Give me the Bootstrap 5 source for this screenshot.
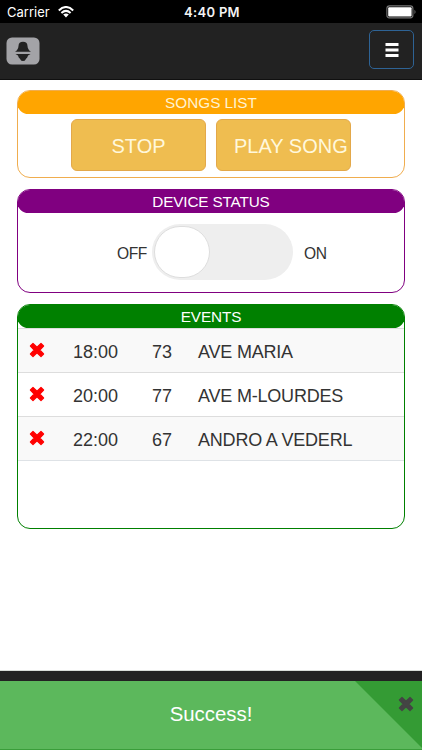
<!DOCTYPE html>
<html lang="en">
<head>
<meta charset="utf-8">
<meta name="viewport" content="width=device-width, initial-scale=1">
<title>Songs</title>
<link href="https://cdn.jsdelivr.net/npm/bootstrap@5.3.0/dist/css/bootstrap.min.css" rel="stylesheet">
<style>
body{font-family:"Liberation Sans",Arial,sans-serif;color:#333;height:750px;overflow:hidden}
.status{height:23px;background:#000;color:#fff;font:13px/24px Inter,sans-serif;padding:0 5px 0 7px}
.status .side{flex:1 1 0}
.clock{font-weight:600;letter-spacing:.3px;color:#f4f4f4}
.top{height:57px;background:#222;border-bottom:1px solid #101010;padding:0 8px 0 6px}
.menu-btn{width:45px;height:39px;border:1px solid #2e6395;border-radius:5px;padding:0;margin-top:-3px}
.page{padding:10px 17px 0 17px;gap:11px;height:590px}
.panel{border:1px solid;border-radius:13px;overflow:hidden;width:388px}
.panel-title{height:23px;border-radius:12px;margin:0 -1px;color:#fff;font-size:15.3px;line-height:24px;text-align:center}
.songs{height:88px;border-color:#f0ad4e}.songs .panel-title{background:#ffa500;color:#fff3d0}
.device{height:104px;border-color:purple}.device .panel-title{background:purple;letter-spacing:-.15px}
.events{height:225px;border-color:green}.events .panel-title{background:green;letter-spacing:-.1px}
.song-row{gap:10px;padding-top:5px}
.song-btn{width:135px;height:52px;background:#efbd50;border:1px solid #e3a84a;border-radius:6px;color:#fff8dc;font-size:20px;line-height:52px;padding:0;white-space:nowrap}
.song-btn:hover{background:#efbd50;color:#fff8dc}
.song-btn.play{padding-left:17px;text-align:left}
.switch-row{font-size:15.6px;padding-top:11px;padding-left:99px}
.switch-row span{padding-top:4px;letter-spacing:-.4px}
.track{width:141px;height:56px;border-radius:28px;background:#eee;padding:2px;margin:0 11px 0 5px}
.knob{width:56px;height:52px;border-radius:26px;background:#fff;border:1px solid #ddd}
.event-row{height:44px;border-top:1px solid #ddd;font-size:18px;line-height:47px;padding-left:11px}
.event-row:nth-child(odd){background:#f9f9f9}
.event-row span{white-space:nowrap}
.event-row svg{margin-top:13px;margin-right:28px;flex:none;color:red}
.time{width:79px}.num{width:46px}
.event-name{letter-spacing:-.2px}
.foot{height:11px;background:#222;border-top:1px solid #d8dcd8}
.notice{height:69px;background:#5cb85c;border-bottom:1px solid #3a9d3a;color:#fff;font-size:20.4px;line-height:67px}
.fold{right:0;top:0;color:#444}
</style>
<script src="https://cdn.jsdelivr.net/npm/bootstrap@5.3.0/dist/js/bootstrap.bundle.min.js"></script>
</head>
<body class="bg-white d-flex flex-column">
<svg width="0" height="0" class="position-absolute"><defs>
<symbol id="cross" viewBox="0 0 16 16"><path d="M4 1.4 8 5.2 12 1.4 14.6 4 10.8 8 14.6 12 12 14.6 8 10.8 4 14.6 1.4 12 5.2 8 1.4 4Z" fill="currentColor" stroke="currentColor" stroke-width="1.2" stroke-linejoin="round"/></symbol>
</defs></svg>
<div class="status d-flex flex-shrink-0">
  <div class="side d-flex align-items-center">Carrier
    <svg class="ms-2" width="16" height="12" viewBox="0 0 16 12" fill="none" stroke="#fff" stroke-width="2"><path d="M.8 4.4Q8-2.4 15.2 4.4M3.4 7Q8 2.8 12.6 7"/><path d="M5.2 8.6Q8 6.2 10.8 8.6L8 11.6Z" fill="#fff" stroke="none"/></svg>
  </div>
  <div class="clock">4:40 PM</div>
  <div class="side d-flex justify-content-end align-items-center">
    <svg width="31" height="14" viewBox="0 0 31 14"><rect x=".9" y=".9" width="26" height="12" rx="2.6" fill="none" stroke="#777" stroke-width="1.1"/><rect x="2.2" y="2.2" width="23.4" height="9.4" rx="1" fill="#fff"/><path d="M28.5 4.8Q30.5 7 28.5 9.2Z" fill="#777"/></svg>
  </div>
</div>
<nav class="top d-flex justify-content-between align-items-center flex-shrink-0">
  <svg width="34" height="28" viewBox="0 0 34 28"><rect x=".5" y=".5" width="33" height="27" rx="5.5" fill="#a3a3a7"/><path d="M9 14.7Q12.3 12.8 12.5 9Q12.7 4.8 17 4.8Q21.3 4.8 21.5 9Q21.7 12.8 25 14.7ZM9.5 17H24.5Q21.4 18 21 21Q20 21.3 19.6 22.4Q19 24 17 24Q15 24 14.4 22.4Q14 21.3 13 21Q12.6 18 9.5 17Z" fill="#222"/></svg>
  <button class="btn menu-btn d-flex align-items-center justify-content-center" aria-label="Menu"><svg width="14" height="14" viewBox="0 0 14 14" fill="#fff"><path d="M.5 0h13v3H.5zM.5 5.5h13v3H.5zM.5 11h13v3H.5z"/></svg></button>
</nav>
<main class="page d-flex flex-column flex-shrink-0">
  <section class="panel songs flex-shrink-0">
    <div class="panel-title">SONGS LIST</div>
    <div class="song-row d-flex justify-content-center">
      <button class="btn song-btn">STOP</button>
      <button class="btn song-btn play">PLAY SONG</button>
    </div>
  </section>
  <section class="panel device flex-shrink-0">
    <div class="panel-title">DEVICE STATUS</div>
    <div class="switch-row d-flex align-items-center"><span>OFF</span><div class="track"><div class="knob"></div></div><span>ON</span></div>
  </section>
  <section class="panel events flex-shrink-0">
    <div class="panel-title">EVENTS</div>
    <div class="border-bottom">
      <div class="event-row d-flex"><svg width="16" height="16"><use href="#cross"/></svg><span class="time">18:00</span><span class="num">73</span><span class="event-name">AVE MARIA</span></div>
      <div class="event-row d-flex"><svg width="16" height="16"><use href="#cross"/></svg><span class="time">20:00</span><span class="num">77</span><span class="event-name">AVE M-LOURDES</span></div>
      <div class="event-row d-flex"><svg width="16" height="16"><use href="#cross"/></svg><span class="time">22:00</span><span class="num">67</span><span class="event-name">ANDRO A VEDERL</span></div>
    </div>
  </section>
</main>
<footer class="foot flex-shrink-0"></footer>
<div class="notice position-relative text-center flex-shrink-0">Success!
  <svg class="fold position-absolute" width="67" height="68" viewBox="0 0 67 68"><path d="M0 0H67V67Z" fill="#349b34"/><svg x="43" y="15" width="16" height="16"><use href="#cross"/></svg></svg>
</div>
</body>
</html>
